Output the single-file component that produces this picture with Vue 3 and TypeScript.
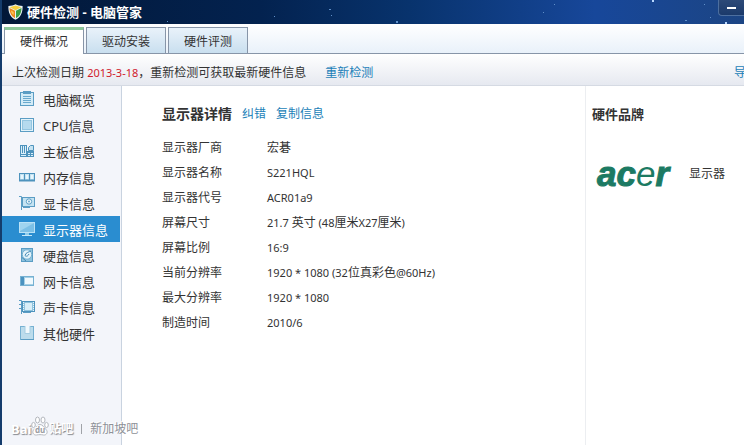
<script setup lang="ts">
import { ref } from 'vue'

interface Row {
  label: string
  value: string
}

const tabs: string[] = ['硬件概况', '驱动安装', '硬件评测']
const activeTab = ref(0)

const items: { icon: string; label: string }[] = [
  { icon: 'overview', label: '电脑概览' },
  { icon: 'cpu', label: 'CPU信息' },
  { icon: 'board', label: '主板信息' },
  { icon: 'memory', label: '内存信息' },
  { icon: 'gpu', label: '显卡信息' },
  { icon: 'monitor', label: '显示器信息' },
  { icon: 'disk', label: '硬盘信息' },
  { icon: 'network', label: '网卡信息' },
  { icon: 'sound', label: '声卡信息' },
  { icon: 'other', label: '其他硬件' },
]
const activeItem = ref('monitor')

const rows: Row[] = [
  { label: '显示器厂商', value: '宏碁' },
  { label: '显示器名称', value: 'S221HQL' },
  { label: '显示器代号', value: 'ACR01a9' },
  { label: '屏幕尺寸', value: '21.7 英寸 (48厘米X27厘米)' },
  { label: '屏幕比例', value: '16:9' },
  { label: '当前分辨率', value: '1920 * 1080 (32位真彩色@60Hz)' },
  { label: '最大分辨率', value: '1920 * 1080' },
  { label: '制造时间', value: '2010/6' },
]

/* Splits a value into Latin and Chinese runs, which are set in different sizes. */
function runs(text: string): { text: string; latin: boolean }[] {
  return (text.match(/[\u4e00-\u9fff]+|[^\u4e00-\u9fff]+/g) ?? []).map((t) => ({
    text: t,
    latin: !/[\u4e00-\u9fff]/.test(t),
  }))
}
</script>

<template>
  <div class="window">
    <header class="titlebar">
      <svg class="stars" viewBox="0 0 744 24" preserveAspectRatio="none" aria-hidden="true">
        <g fill="#5f8fc8">
          <rect x="274" y="16" width="1" height="1" />
          <rect x="329" y="9" width="2" height="1" />
          <rect x="331" y="15" width="1" height="1" />
          <rect x="396" y="21" width="2" height="2" />
          <rect x="167" y="21" width="1" height="1" />
          <rect x="543" y="12" width="1" height="1" />
          <rect x="554" y="4" width="1" height="1" />
          <rect x="704" y="4" width="1" height="1" />
          <rect x="710" y="17" width="1" height="1" />
          <rect x="685" y="20" width="2" height="1" />
        </g>
        <rect x="652" y="0" width="2" height="2" fill="#b9d8ff" />
        <rect x="725" y="22" width="2" height="2" fill="#b9d8ff" />
      </svg>
      <svg class="shield" viewBox="0 0 15 16" aria-hidden="true">
        <path d="M7.500 0.300C9.500 1.500 12 2 14.600 2C14.800 8.500 13 13.200 7.500 15.800C2 13.200 0.200 8.500 0.400 2C3 2 5.500 1.500 7.500 0.300Z" fill="#e9f3f6" />
        <path d="M7.500 1.600L13.400 3.200L7.500 6.200L1.600 3.200Z" fill="#f6cf3f" />
        <path d="M1.500 4L7 6.800V14.200C3.200 12 1.700 9 1.500 4Z" fill="#f08a1d" />
        <path d="M13.500 4L8 6.800V14.200C11.800 12 13.300 9 13.500 4Z" fill="#3da045" />
        <path d="M3 6.500L5.600 8V11C3.800 9.800 3.200 8.500 3 6.500Z" fill="#fbc75a" />
      </svg>
      <h1 class="title">硬件检测 - 电脑管家</h1>
      <button class="minimize" type="button" aria-label="最小化"></button>
    </header>

    <nav class="tabs">
      <button
        v-for="(tab, i) in tabs"
        :key="tab"
        type="button"
        class="tab"
        :class="{ active: i === activeTab }"
        @click="activeTab = i"
      >{{ tab }}</button>
    </nav>

    <div class="notice">
      <p>上次检测日期 <time class="date" datetime="2013-03-18">2013-3-18</time>，重新检测可获取最新硬件信息</p>
      <a class="link" href="#recheck">重新检测</a>
      <a class="link export" href="#export">导</a>
    </div>

    <div class="body">
      <aside class="sidebar">
        <button
          v-for="item in items"
          :key="item.icon"
          type="button"
          class="item"
          :class="{ active: item.icon === activeItem }"
          @click="activeItem = item.icon"
        >
          <svg class="icon" viewBox="0 0 16 16" aria-hidden="true">
            <g v-if="item.icon === 'overview'">
              <rect x="1.500" y="1.500" width="13" height="13" fill="#d3ebf7" stroke="#5b9dc4" />
              <rect x="4" y="0" width="8" height="3" fill="#5b9dc4" />
              <path d="M4 5.500H12M4 7.500H12M4 9.500H12M4 11.500H12" stroke="#6aa9cd" />
            </g>
            <g v-else-if="item.icon === 'cpu'">
              <rect x="1.500" y="1.500" width="13" height="13" fill="#e4f3fa" stroke="#5b9dc4" />
              <rect x="3.500" y="3.500" width="9" height="9" fill="#b5daee" stroke="#93c5e0" />
            </g>
            <g v-else-if="item.icon === 'board'">
              <rect x="1.500" y="2.500" width="6" height="11" fill="#dcf0fa" stroke="#4e93bd" />
              <path d="M3.500 3V10M5.500 3V10" stroke="#4e93bd" />
              <path d="M2 11.500H7" stroke="#4e93bd" />
              <path d="M8 8H15V14H8Z" fill="#4e93bd" />
              <path d="M9.500 7.500V4.500L11.500 2.500H14.500V7.500Z" fill="#c5e3f2" stroke="#4e93bd" />
              <path d="M9 10.500H14M9 12.500H14" stroke="#dcf0fa" stroke-dasharray="2 1" />
            </g>
            <g v-else-if="item.icon === 'memory'">
              <rect x="0.500" y="4.500" width="15" height="7" fill="#c5e3f2" stroke="#4e93bd" />
              <path d="M5.500 5V11M10.500 5V11" stroke="#4e93bd" />
              <path d="M3 6V10M8 6V10M13 6V10" stroke="#e8f6fd" stroke-width="2" />
              <path d="M0 11.500H16" stroke="#4e93bd" stroke-width="2" />
            </g>
            <g v-else-if="item.icon === 'gpu'">
              <path d="M0 1.500H2.500V15" fill="none" stroke="#5b9dc4" />
              <rect x="3.500" y="2.500" width="12" height="9" fill="#c5e3f2" stroke="#5b9dc4" />
              <circle cx="10" cy="6.500" r="2.700" fill="#eef8fd" stroke="#5b9dc4" />
              <circle cx="10" cy="6.500" r="0.900" fill="#5b9dc4" />
              <path d="M4 12.500H11" stroke="#5b9dc4" stroke-width="1" />
            </g>
            <g v-else-if="item.icon === 'monitor'">
              <rect x="0.500" y="1.500" width="15" height="10" fill="#7cc0e6" stroke="#b9e2f7" />
              <path d="M1 2H15L1 10Z" fill="#9fd4ef" />
              <path d="M6 12H10V14H6Z" fill="#8fcdec" />
              <path d="M3 14.500H13" stroke="#c5e8f9" />
            </g>
            <g v-else-if="item.icon === 'disk'">
              <rect x="2.500" y="1.500" width="11" height="13" fill="#8fc3de" stroke="#5b9dc4" />
              <circle cx="8" cy="7.500" r="4.700" fill="#e4f3fa" stroke="#76b1d2" />
              <path d="M12 4C10 5 6.500 5.500 6 8.500C7.500 10 9 9 10 7" fill="none" stroke="#4389b5" />
              <path d="M3 10.500L7 14" stroke="#4389b5" />
            </g>
            <g v-else-if="item.icon === 'network'">
              <rect x="1.500" y="3.500" width="13" height="9" fill="#a6d0e6" stroke="#76b1d2" />
              <path d="M2 4H5V12H2Z" fill="#4a92c0" />
              <rect x="6" y="5" width="8" height="6" fill="#f1f9fd" />
            </g>
            <g v-else-if="item.icon === 'sound'">
              <path d="M0 1.500H2.500V15M0 5.500H2M0 9.500H2" fill="none" stroke="#5b9dc4" />
              <rect x="3.500" y="2.500" width="12" height="10" fill="#8fc3de" stroke="#4e93bd" />
              <rect x="6" y="4" width="7" height="7" fill="#d9eef8" />
              <path d="M4.500 3V12M14.500 3V12" stroke="#eaf6fc" stroke-dasharray="1 1" />
              <path d="M4 13.500H12" stroke="#5b9dc4" />
            </g>
            <g v-else>
              <rect x="1.500" y="1.500" width="13" height="13" fill="#bcdcec" stroke="#76b1d2" />
              <path d="M6 1H11V8H6Z" fill="#f1f9fd" />
              <path d="M6 1V8.500H11V1" fill="none" stroke="#a5cde2" />
              <path d="M2 14.500H15" stroke="#5b9dc4" />
            </g>
          </svg>
          <span>{{ item.label }}</span>
        </button>
      </aside>

      <main class="details">
        <div class="heading">
          <h2>显示器详情</h2>
          <a class="link" href="#correct">纠错</a>
          <a class="link" href="#copy">复制信息</a>
        </div>
        <table>
          <tbody>
            <tr v-for="row in rows" :key="row.label">
              <th scope="row">{{ row.label }}</th>
              <td><span v-for="(run, i) in runs(row.value)" :key="i" :class="{ latin: run.latin }">{{ run.text }}</span></td>
            </tr>
          </tbody>
        </table>
      </main>

      <section class="brands">
        <h2>硬件品牌</h2>
        <div class="brand">
          <span class="acer">ac<span class="thin">e</span>r</span>
          <span>显示器</span>
        </div>
      </section>
    </div>

    <div class="watermark">
      <span class="bai">Bai</span>
      <svg class="paw" viewBox="0 0 18 20" aria-hidden="true">
        <g fill="#fff" stroke="#b4b8be">
          <ellipse cx="6.500" cy="4" rx="2" ry="3" />
          <ellipse cx="12" cy="4" rx="2" ry="3" />
          <ellipse cx="2.500" cy="9" rx="1.800" ry="2.600" />
          <ellipse cx="15.500" cy="9" rx="1.800" ry="2.600" />
          <path d="M9 8.500C12 8.500 12.500 11.500 15 13.500C17.500 16 15.500 19.500 12.500 19C10 18.500 8 18.500 5.500 19C2.500 19.500 0.500 16 3 13.500C5.500 11.500 6 8.500 9 8.500Z" />
        </g>
        <text x="4" y="17" class="du">du</text>
      </svg>
      <span class="tieba">贴吧</span>
      <span class="bar"></span>
      <span>新加坡吧</span>
    </div>
  </div>
</template>

<style>
body {
  margin: 0;
  overflow: hidden;
}
</style>

<style scoped>
.window {
  position: relative;
  display: flex;
  flex-direction: column;
  box-sizing: border-box;
  min-height: 100vh;
  overflow: hidden;
  border-left: 2px solid #143c6c;
  background: #fff;
  color: #333;
  font-family: "Noto Sans", "Noto Sans CJK SC", sans-serif;
  font-size: 12px;
  line-height: 16px;
}

h1,
h2,
p {
  margin: 0;
}

button {
  margin: 0;
  padding: 0;
  border: 0;
  background: none;
  color: inherit;
  font: inherit;
}

.link {
  color: #1b7fb8;
  text-decoration: none;
  white-space: nowrap;
}

.titlebar {
  position: relative;
  display: flex;
  align-items: center;
  gap: 4px;
  height: 24px;
  margin-left: -2px;
  padding-left: 8px;
  background: linear-gradient(90deg, #021838 0%, #03224f 35%, #08336d 55%, #17479a 80%, #1c4584 100%);
}

.stars {
  position: absolute;
  inset: 0;
  width: 100%;
  height: 100%;
}

.shield {
  width: 15px;
  height: 16px;
}

.title {
  color: #fff;
  font-size: 13px;
  font-weight: 700;
  white-space: nowrap;
}

.minimize {
  position: relative;
  display: flex;
  align-items: center;
  justify-content: center;
  align-self: flex-start;
  width: 26px;
  height: 16px;
  margin-left: auto;
  border: 1px solid #4d6f9f;
  border-width: 0 0 1px 1px;
  border-radius: 0 0 0 4px;
  background: linear-gradient(#2d4a78, #1b3a6b);
}

.minimize::before {
  width: 9px;
  height: 2px;
  background: #fff;
  content: "";
}

.tabs {
  display: flex;
  gap: 2px;
  padding: 3px 0 0 2px;
  border-bottom: 1px solid #8795a8;
  background: linear-gradient(#fff, #e9f1fa);
}

.tab {
  box-sizing: border-box;
  width: 80px;
  height: 26px;
  padding-top: 2px;
  border: 1px solid #8795a8;
  border-bottom: 0;
  background: linear-gradient(#e9f2fa, #c9dfef);
}

.tab.active {
  height: 27px;
  margin-bottom: -1px;
  padding-top: 0;
  border-top: 3px solid #8cc89a;
  background: #fff;
}

.notice {
  display: flex;
  align-items: center;
  gap: 19px;
  box-sizing: border-box;
  height: 32px;
  padding: 6px 0 0 10px;
  border-bottom: 1px solid #d5dae3;
  background: linear-gradient(#fff, #e6e9f0);
  white-space: nowrap;
}

.date {
  color: #d0202c;
  font-size: 11px;
}

.export {
  margin-right: -2px;
  margin-left: auto;
}

.body {
  display: flex;
  flex: 1;
}

.sidebar {
  flex: none;
  box-sizing: border-box;
  width: 120px;
  padding-right: 1px;
  border-right: 1px solid #c9d3e0;
  background: #f3f5fa;
}

.item {
  display: flex;
  align-items: center;
  gap: 8px;
  width: 100%;
  height: 26px;
  padding-left: 17px;
  font-size: 13px;
}

.item span {
  padding-top: 1px;
}

.item.active {
  background: #2a8dd0;
  color: #fff;
}

.icon {
  width: 16px;
  height: 16px;
}

.details {
  flex: 1;
  padding: 18px 0 0 40px;
}

.heading {
  display: flex;
  align-items: center;
  gap: 10px;
  height: 20px;
}

h2 {
  font-size: 12px;
  font-weight: 700;
}

.heading h2 {
  font-size: 14px;
}

table {
  margin-top: 11px;
  border-collapse: collapse;
}

th,
td {
  height: 25px;
  padding: 0;
  font-weight: 400;
  text-align: left;
  white-space: nowrap;
}

th {
  width: 105px;
}

.latin {
  font-size: 11px;
}

.brands {
  flex: none;
  box-sizing: border-box;
  width: 159px;
  padding: 20px 0 0 6px;
  border-left: 1px solid #eceef1;
}

.brands h2 {
  font-size: 13px;
}

.brand {
  display: flex;
  align-items: center;
  gap: 20px;
  margin-top: 33px;
  padding-left: 5px;
}

.acer {
  color: #1c7a63;
  font-family: "Liberation Sans", sans-serif;
  font-size: 35px;
  font-style: italic;
  font-weight: 700;
  line-height: 38px;
  -webkit-text-stroke: 1px #1c7a63;
}

.thin {
  font-weight: 400;
  -webkit-text-stroke: 0;
}

.watermark {
  position: absolute;
  bottom: 3px;
  left: 9px;
  display: flex;
  align-items: center;
  color: #8e9197;
  text-shadow: -1px -1px 0 #fff;
}

.bai,
.tieba {
  color: #fff;
  font-weight: 700;
  text-shadow: 1px 1px 1px #85888e;
}

.bai {
  font-size: 13px;
}

.paw {
  width: 18px;
  height: 20px;
  margin-bottom: 6px;
}

.du {
  fill: #9a9da3;
  font-size: 8px;
  font-weight: 700;
}

.bar {
  width: 1px;
  height: 10px;
  margin: 0 8px;
  background: #a0a3a8;
}
</style>
